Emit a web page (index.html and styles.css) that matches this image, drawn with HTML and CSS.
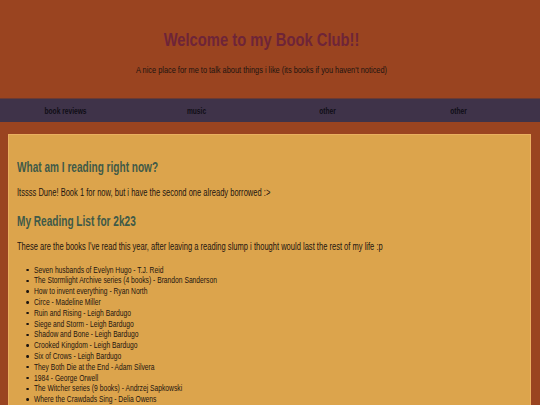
FILE: index.html
```html
<!DOCTYPE html>
<html>
<head>
<meta charset="utf-8">
<link rel="stylesheet" href="styles.css">
</head>
<body>
<header class="site-header">
  <h1 class="title">Welcome to my Book Club!!</h1>
  <p class="tagline">A nice place for me to talk about things i like (its books if you haven't noticed)</p>
</header>
<nav class="nav">
  <a class="nav-link">book reviews</a>
  <a class="nav-link">music</a>
  <a class="nav-link">other</a>
  <a class="nav-link">other</a>
</nav>
<main class="content">
  <h2 class="section-title">What am I reading right now?</h2>
  <p class="text">Itssss Dune! Book 1 for now, but i have the second one already borrowed :&gt;</p>
  <h2 class="section-title">My Reading List for 2k23</h2>
  <p class="text">These are the books I've read this year, after leaving a reading slump i thought would last the rest of my life :p</p>
  <ul class="books">
    <li>Seven husbands of Evelyn Hugo - T.J. Reid</li>
    <li>The Stormlight Archive series (4 books) - Brandon Sanderson</li>
    <li>How to invent everything - Ryan North</li>
    <li>Circe - Madeline Miller</li>
    <li>Ruin and Rising - Leigh Bardugo</li>
    <li>Siege and Storm - Leigh Bardugo</li>
    <li>Shadow and Bone - Leigh Bardugo</li>
    <li>Crooked Kingdom - Leigh Bardugo</li>
    <li>Six of Crows - Leigh Bardugo</li>
    <li>They Both Die at the End - Adam Silvera</li>
    <li>1984 - George Orwell</li>
    <li>The Witcher series (9 books) - Andrzej Sapkowski</li>
    <li>Where the Crawdads Sing - Delia Owens</li>
  </ul>
</main>
</body>
</html>
```

FILE: styles.css
```css
html, body {
  margin: 0;
  padding: 0;
}
body {
  background: #9a4420;
  font-family: "Liberation Sans", Arial, sans-serif;
  color: #1c1410;
  overflow: hidden;
  height: 405px;
}
.site-header {
  text-align: center;
  padding: 28px 17px 0 0;
  height: 99px;
  box-sizing: border-box;
}
.title {
  margin: 0;
  font-size: 18px;
  line-height: 24px;
  font-weight: bold;
  color: #6e2438;
  transform: scaleX(0.82);
}
.tagline {
  margin: 12px 0 0;
  font-size: 9.8px;
  line-height: 12px;
  color: #1c1410;
  transform: scaleX(0.754);
}
.nav {
  display: grid;
  grid-template-columns: repeat(4, 131px);
  background: #3f3349;
  height: 23px;
  align-items: center;
  box-shadow: 0 -1px 0 #6a3a34;
}
.nav-link {
  display: block;
  text-align: center;
  font-size: 9px;
  font-weight: bold;
  color: #100e16;
  transform: scaleX(0.737);
}
.content {
  margin: 12px 9px 0 8px;
  background: #dca44c;
  border: 1px solid #eab060;
  padding: 23px 8px 8px 8px;
  height: 400px;
}
.section-title {
  margin: 0;
  font-size: 14px;
  line-height: 18px;
  font-weight: bold;
  color: #3f5a48;
  transform: scaleX(0.72);
  transform-origin: left center;
}
.text {
  margin: 11px 0 13px;
  font-size: 10px;
  line-height: 12px;
  color: #1c1410;
  white-space: nowrap;
  transform: scaleX(0.755);
  transform-origin: left center;
}
.books {
  margin: -1.4px 0 0;
  padding-left: 24px;
  list-style: none;
  font-size: 9.5px;
  line-height: 10.8px;
  transform: scaleX(0.707);
  transform-origin: left top;
}
.books li {
  position: relative;
}
.books li::before {
  content: "";
  position: absolute;
  left: -10.8px;
  top: 4.2px;
  width: 3.5px;
  height: 2.5px;
  background: #1c1410;
  border-radius: 50%;
}
```
